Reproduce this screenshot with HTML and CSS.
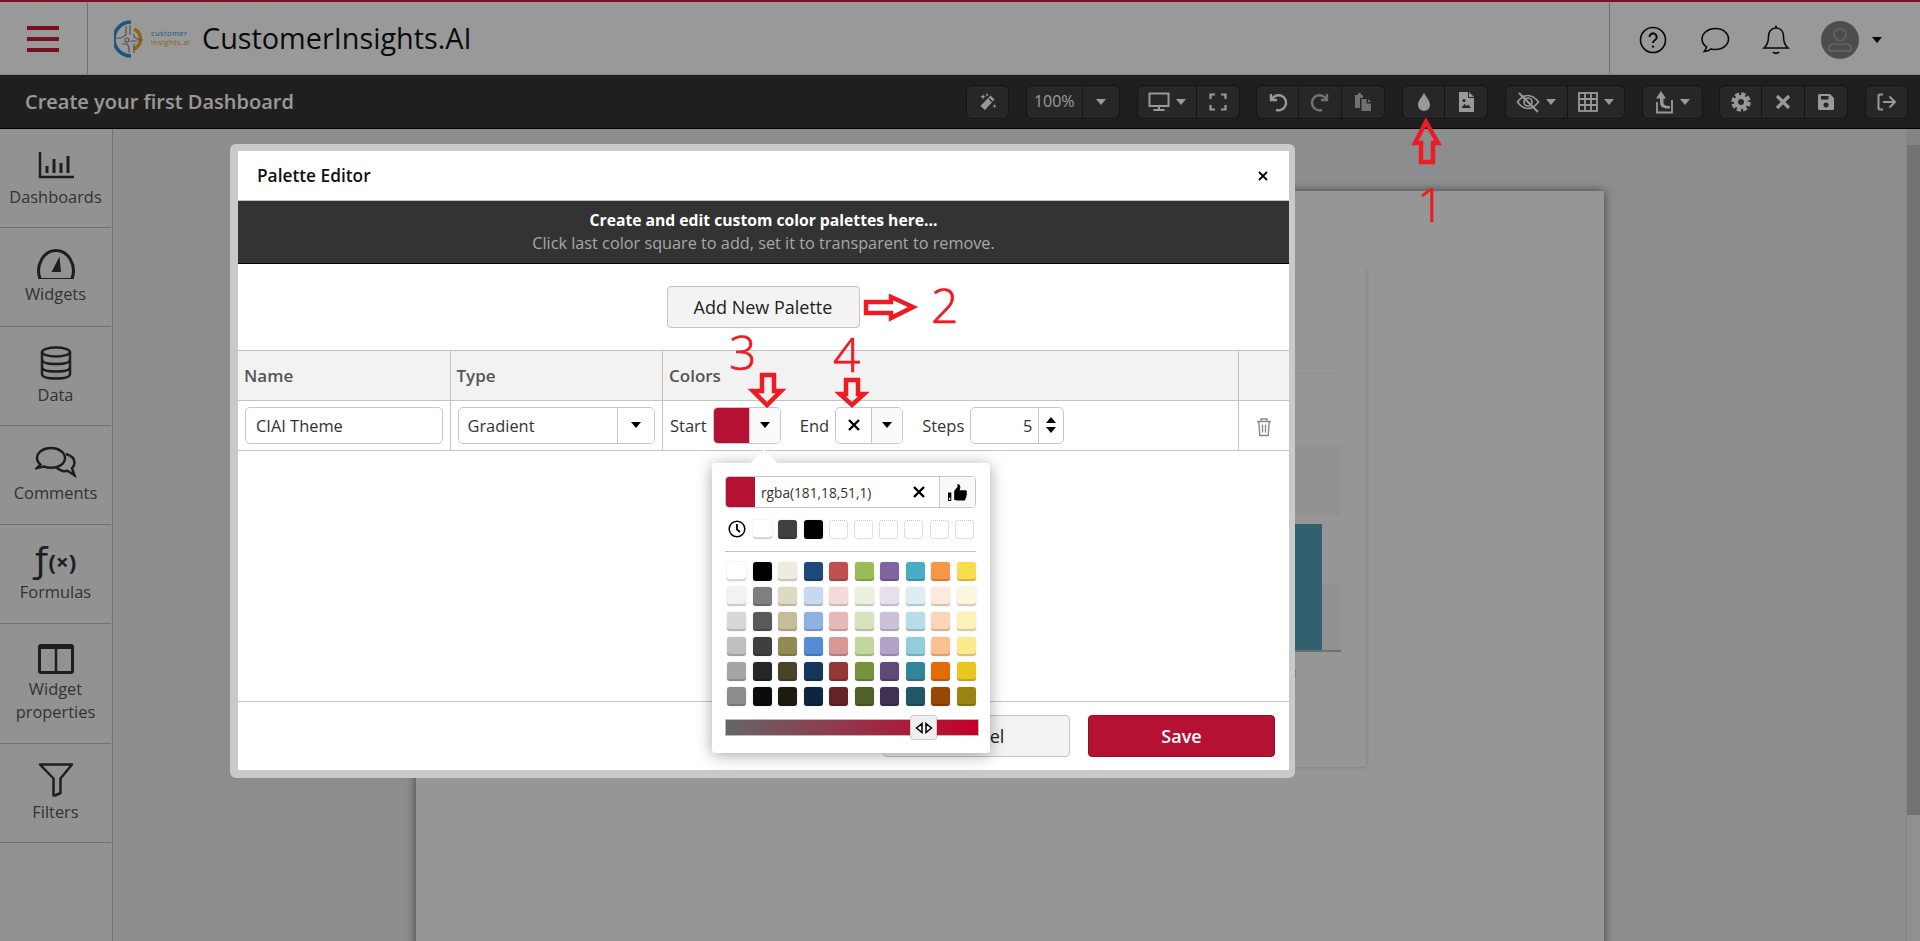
FILE: index.html
```html
<!DOCTYPE html>
<html lang="en">
<head>
<meta charset="utf-8">
<title>CustomerInsights.AI</title>
<link rel="stylesheet" href="styles.css">
</head>
<body>
<header class="topbar">
  <div class="burger"><span></span><span></span><span></span></div>
  <div class="brand">
    <svg class="logo-mark" viewBox="0 0 32 38" width="32" height="38" fill="none">
      <path d="M16 2A17 17 0 0 0 16 36" stroke="#2f8fc9" stroke-width="3.5" transform="translate(1 0)"/>
      <path d="M20 9A11 11 0 0 1 20 29" stroke="#f0a428" stroke-width="3.5"/>
      <path d="M12 6V15L7 18H2M16 5V15M20 14V17L25 20H29M8 24H13L15 27V33M20 24V33M17 21H23" stroke="#8a8a8a" stroke-width="1.2"/>
      <circle cx="13" cy="20" r="2" stroke="#8a8a8a" stroke-width="1.2"/>
    </svg>
    <div class="logo-text"><span class="logo-a">customer</span><span class="logo-b">insights.ai</span></div>
    <h1 class="app-title">CustomerInsights.AI</h1>
  </div>
  <div class="user-tools">
    <svg class="ut" viewBox="0 0 28 28" width="28" height="28" fill="none" stroke="#111" stroke-width="1.6"><circle cx="14" cy="14" r="12.5"/><path d="M10.5 11a3.6 3.6 0 1 1 5.6 3c-1.4.9-2.1 1.5-2.1 3" stroke-width="2"/><circle cx="14" cy="20.6" r="1.2" fill="#111" stroke="none"/></svg>
    <svg class="ut" viewBox="0 0 30 28" width="30" height="28" fill="none" stroke="#111" stroke-width="1.6"><path d="M15.5 2.500c7.500 0 13 4.600 13 10.500s-5.500 10.500-13 10.500c-1.600 0-3-.2-4.300-.6-1.800 1.400-4 2.400-7 2.600 1.200-1.500 2-3 2.300-4.700C3.600 19 2 16.200 2 13 2 7.100 8 2.500 15.500 2.500z"/></svg>
    <svg class="ut" viewBox="0 0 28 32" width="28" height="32" fill="none" stroke="#111" stroke-width="1.6"><path d="M14 1.500v2.500M14 4c-5 0-7.500 3.800-7.500 8.500 0 6-1.500 9-4.500 11.500h24c-3-2.500-4.500-5.500-4.500-11.500C21.500 7.800 19 4 14 4zM11 28c1 1.600 5 1.600 6 0"/></svg>
    <div class="avatar">
      <svg viewBox="0 0 38 38" width="38" height="38" fill="none" stroke="#a8a8a8" stroke-width="1.6"><circle cx="19" cy="13.500" r="6"/><path d="M8 30v-2.500c0-3 2-4.500 5-4.500h12c3 0 5 1.500 5 4.500V30z"/></svg>
    </div>
    <span class="caret caret-dark"></span>
  </div>
</header>

<div class="toolbar">
  <div class="tb-title">Create your first Dashboard</div>
  <div class="tb-actions">
    <div class="tb-group">
      <button class="tb-btn w43"><svg viewBox="0 0 20 20" width="20" height="20" fill="#fff"><path d="M12.500 3.500l4 4L7 18l-4.500-4z"/><path d="M11 6.500l3.500 3.500" stroke="#3f3f3f" stroke-width="1.200"/><path d="M5 2l.8 2 2 .8-2 .8L5 7.500l-.8-1.900-2-.8 2-.8zM9 1l.5 1.200L10.700 3l-1.200.5L9 4.700l-.5-1.200L7.300 3l1.200-.8zM16.500 12l.6 1.500 1.500.6-1.500.6-.6 1.500-.6-1.500-1.500-.6 1.500-.6z"/></svg></button>
    </div>
    <div class="tb-group">
      <button class="tb-btn w57 tb-text">100%</button>
      <button class="tb-btn w37"><span class="caret"></span></button>
    </div>
    <div class="tb-group">
      <button class="tb-btn w60"><svg viewBox="0 0 22 20" width="22" height="20" fill="none" stroke="#fff" stroke-width="2"><rect x="1.500" y="1.500" width="19" height="12.500"/><path d="M11 14v4M5.500 18h11"/></svg><span class="caret"></span></button>
      <button class="tb-btn w43"><svg viewBox="0 0 18 18" width="18" height="18" fill="none" stroke="#fff" stroke-width="2.200"><path d="M1.500 6V1.500H6M12 1.500h4.500V6M16.500 12v4.500H12M6 16.500H1.500V12"/></svg></button>
    </div>
    <div class="tb-group">
      <button class="tb-btn w43"><svg viewBox="0 0 20 20" width="20" height="20" fill="none" stroke="#fff" stroke-width="2.400"><path d="M3 2v6h6"/><path d="M3.500 8A7.500 7.500 0 1 1 8 17.800"/></svg></button>
      <button class="tb-btn w43 dim"><svg viewBox="0 0 20 20" width="20" height="20" fill="none" stroke="#fff" stroke-width="2.400"><path d="M17 2v6h-6"/><path d="M16.500 8A7.500 7.500 0 1 0 12 17.800"/></svg></button>
      <button class="tb-btn w43 dim"><svg viewBox="0 0 18 20" width="18" height="20" fill="#fff"><path d="M1 3h3V1h3v2h2v3H6v10H1z"/><path d="M7.500 7h5v4.500H17V19H7.500zM14 7l3 3h-3z"/></svg></button>
    </div>
    <div class="tb-group">
      <button class="tb-btn w43"><svg viewBox="0 0 14 20" width="14" height="20" fill="#fff"><path d="M7 .5c1 3.500 6 7.500 6 12.500a6 6 0 0 1-12 0C1 8 6 4 7 .5z"/></svg></button>
      <button class="tb-btn w43"><svg viewBox="0 0 15 20" width="15" height="20" fill="#fff"><path d="M0 0h9v6h6v14H0zM10 0l5 5h-5z"/><path d="M2.500 16l3-4 2 2 1.500-1.500 3 3.500z" fill="#3f3f3f"/><circle cx="5" cy="8.500" r="1.500" fill="#3f3f3f"/></svg></button>
    </div>
    <div class="tb-group">
      <button class="tb-btn w63"><svg viewBox="0 0 24 22" width="24" height="22" fill="none" stroke="#fff" stroke-width="1.700"><path d="M1.500 11C5 6.500 8.500 4.500 12 4.500S19 6.500 22.500 11C19 15.500 15.500 17.500 12 17.500S5 15.500 1.500 11z"/><circle cx="12" cy="11" r="4"/><path d="M3 2l19 19" stroke-width="2"/></svg><span class="caret"></span></button>
      <button class="tb-btn w57"><svg viewBox="0 0 20 20" width="20" height="20" fill="none" stroke="#fff" stroke-width="1.800"><rect x="1" y="1" width="18" height="18"/><path d="M7 1v18M13 1v18M1 7h18M1 13h18"/></svg><span class="caret"></span></button>
    </div>
    <div class="tb-group">
      <button class="tb-btn w61"><svg viewBox="0 0 20 24" width="20" height="24" fill="none" stroke="#fff"><path d="M2 8.500L7 1l5 7.500H9.500v4c0 2.500 2 3.500 6.500 3.500v2.500c-6 .5-10-1.500-10-6V8.500z" fill="#fff" stroke="none"/><path d="M3 12v10.500h15V10" stroke-width="1.800"/></svg><span class="caret"></span></button>
    </div>
    <div class="tb-group">
      <button class="tb-btn w43"><svg viewBox="0 0 20 20" width="20" height="20" fill="none" stroke="#fff"><circle cx="10" cy="10" r="5" stroke-width="4"/><circle cx="10" cy="10" r="8" stroke-width="3.400" stroke-dasharray="4.200 2.080"/></svg></button>
      <button class="tb-btn w43"><svg viewBox="0 0 16 16" width="16" height="16" fill="none" stroke="#fff" stroke-width="3.200"><path d="M2 2l12 12M14 2L2 14"/></svg></button>
      <button class="tb-btn w43"><svg viewBox="0 0 18 18" width="18" height="18" fill="#fff"><path d="M1 2.500Q1 1 2.500 1H13l4 4v10.500q0 1.500-1.500 1.500h-13Q1 17 1 15.500z"/><rect x="4" y="3" width="7.500" height="3.500" fill="#3f3f3f"/><circle cx="9" cy="12" r="2.500" fill="#3f3f3f"/></svg></button>
    </div>
    <div class="tb-group">
      <button class="tb-btn w43"><svg viewBox="0 0 20 18" width="20" height="18" fill="none" stroke="#fff" stroke-width="2"><path d="M6 1.500H3Q1.500 1.500 1.500 3v12q0 1.500 1.500 1.500h3"/><path d="M6 9h12M12.500 3.500L18 9l-5.500 5.500"/></svg></button>
    </div>
  </div>
</div>

<div class="workspace">
  <nav class="sidebar">
    <a class="nav-item nav-first">
      <svg viewBox="0 0 36 28" width="36" height="28" fill="none" stroke="#333"><path d="M2 1v25h34" stroke-width="2.500"/><path d="M9 15v7M16 8v14M23 12v10M30 5v17" stroke-width="3"/></svg>
      <span>Dashboards</span>
    </a>
    <a class="nav-item">
      <svg viewBox="0 0 40 30" width="40" height="30" fill="none" stroke="#333"><path d="M4 29.500C-1 16 8 1.500 20 1.500s21 14.500 16 28" stroke-width="3"/><path d="M2 29.500h36" stroke-width="1"/><path d="M23.500 7.500L25 23H15.500z" fill="#333" stroke="none"/></svg>
      <span>Widgets</span>
    </a>
    <a class="nav-item">
      <svg viewBox="0 0 32 34" width="32" height="34" fill="none" stroke="#333" stroke-width="2.500"><ellipse cx="16" cy="6" rx="14" ry="4.500"/><path d="M2 6v22c0 3 6 4.500 14 4.500S30 31 30 28V6M2 13.500c0 3 6 4.500 14 4.500s14-1.500 14-4.500M2 21c0 3 6 4.500 14 4.500S30 24 30 21"/></svg>
      <span>Data</span>
    </a>
    <a class="nav-item">
      <svg viewBox="0 0 42 32" width="42" height="32" fill="none" stroke="#333" stroke-width="2.500"><path d="M16 2C8 2 2 6.500 2 12c0 2.500 1.200 4.800 3.300 6.500L2 22l7-1.500c2 .8 4.500 1.300 7 1.300 8 0 14-4.300 14-9.800S24 2 16 2z"/><path d="M31 8c5 1.500 8.500 4.500 8.500 8.500 0 2.500-1 4.300-2.500 5.800l2.500 7-7-4.500c-2 .5-3.500.6-5 .2-3-.8-5-2-6.500-4"/></svg>
      <span>Comments</span>
    </a>
    <a class="nav-item">
      <span class="fx-mark"><i>ƒ</i><b>(×)</b></span>
      <span>Formulas</span>
    </a>
    <a class="nav-item nav-tall">
      <svg viewBox="0 0 36 30" width="36" height="30" fill="none" stroke="#333"><rect x="1.500" y="1.500" width="33" height="27" rx="1.500" stroke-width="3"/><path d="M1.500 3h33" stroke-width="4"/><path d="M18 2v26" stroke-width="2.500"/></svg>
      <span>Widget<br>properties</span>
    </a>
    <a class="nav-item">
      <svg viewBox="0 0 36 34" width="36" height="34" fill="none" stroke="#333" stroke-width="2.500" stroke-linejoin="round"><path d="M2 1.500h32L22.500 15.500V30l-5.500 2.500h-1.500V15.500z"/></svg>
      <span>Filters</span>
    </a>
  </nav>
  <main class="stage">
    <section class="canvas">
      <div class="card">
        <div class="plot"><div class="bar"></div></div>
        <div class="tick">3</div>
      </div>
    </section>
  </main>
  <div class="scrollbar"><div class="sb-btn"></div><div class="sb-thumb"></div></div>
</div>

<div class="backdrop"></div>

<div class="modal">
  <div class="modal-head"><span>Palette Editor</span><svg viewBox="0 0 10 10" width="10" height="10" fill="none" stroke="#000" stroke-width="1.800"><path d="M1 1l8 8M9 1L1 9"/></svg></div>
  <div class="modal-band"><strong>Create and edit custom color palettes here...</strong><span>Click last color square to add, set it to transparent to remove.</span></div>
  <div class="modal-add"><button class="btn btn-add">Add New Palette</button></div>
  <div class="ptable">
    <div class="pcell phead">Name</div>
    <div class="pcell phead">Type</div>
    <div class="pcell phead">Colors</div>
    <div class="pcell phead"></div>
    <div class="pcell"><div class="field field-name">CIAI Theme</div></div>
    <div class="pcell"><div class="field field-type"><span>Gradient</span><i class="field-drop"><span class="caret caret-dark"></span></i></div></div>
    <div class="pcell pcolors">
      <span class="lbl">Start</span>
      <div class="field color-box"><i class="swatch-main"></i><i class="field-drop"><span class="caret caret-dark"></span></i></div>
      <span class="lbl lbl-next">End</span>
      <div class="field color-box"><i class="swatch-none"><svg viewBox="0 0 12 12" width="12" height="12" fill="none" stroke="#000" stroke-width="2.400"><path d="M1 1l10 10M11 1L1 11"/></svg></i><i class="field-drop"><span class="caret caret-dark"></span></i></div>
      <span class="lbl lbl-next">Steps</span>
      <div class="field field-steps"><span>5</span><i class="spin"><span class="caret-up"></span><span class="caret caret-dark"></span></i></div>
    </div>
    <div class="pcell ptrash"><svg viewBox="0 0 16 20" width="16" height="20" fill="none" stroke="#8a8a8a" stroke-width="1.400"><path d="M1 4.500h14M5 4.500V2h6v2.500M2.800 4.500l1 14h8.400l1-14M6.500 7.500v8M9.500 7.500v8"/></svg></div>
  </div>
  <div class="modal-spacer"></div>
  <div class="modal-foot">
    <button class="btn btn-cancel">Cancel</button>
    <button class="btn btn-save">Save</button>
  </div>

  <div class="picker">
    <div class="pk-input">
      <i class="pk-current"></i>
      <span class="pk-value">rgba(181,18,51,1)</span>
      <svg class="pk-clear" viewBox="0 0 12 12" width="12" height="12" fill="none" stroke="#000" stroke-width="2.400"><path d="M1 1l10 10M11 1L1 11"/></svg>
      <span class="pk-ok"><svg viewBox="0 0 20 20" width="19" height="19" fill="#000"><path d="M6.500 8.500l3.500-4.500V1c2 0 3 1.500 3 3.500 0 1-.4 2-.8 3h6c1 0 1.800.8 1.800 1.800 0 .6-.3 1-.6 1.400.4.300.6.800.6 1.300 0 .7-.4 1.200-.9 1.500.2.300.3.600.3 1 0 .7-.4 1.200-1 1.500.1.200.1.400.1.600 0 1-.8 1.900-2 1.900h-6c-1.500 0-2.500-.6-4-1zM0 10h3.500v9H0z"/><rect x="1" y="15.500" width="1.500" height="2.200" fill="#fff"/></svg></span>
    </div>
    <div class="pk-recent">
      <svg viewBox="0 0 18 18" width="18" height="18" fill="none" stroke="#000" stroke-width="1.500"><circle cx="9" cy="9" r="7.800"/><path d="M9 4v5.500l3 2.500" stroke-width="1.800"/></svg>
      <i class="sw" style="background:#fff"></i><i class="sw" style="background:#404040"></i><i class="sw" style="background:#000"></i>
      <i class="sw-empty"></i><i class="sw-empty"></i><i class="sw-empty"></i><i class="sw-empty"></i><i class="sw-empty"></i><i class="sw-empty"></i>
    </div>
    <div class="pk-rule"></div>
    <div class="pk-grid">
      <i class="sw" style="background:#fff"></i><i class="sw" style="background:#000"></i><i class="sw" style="background:#eeece1"></i><i class="sw" style="background:#1f497d"></i><i class="sw" style="background:#c0504d"></i><i class="sw" style="background:#9bbb59"></i><i class="sw" style="background:#8064a2"></i><i class="sw" style="background:#4bacc6"></i><i class="sw" style="background:#f79646"></i><i class="sw" style="background:#fadd4a"></i>
      <i class="sw" style="background:#f2f2f2"></i><i class="sw" style="background:#7f7f7f"></i><i class="sw" style="background:#ddd9c3"></i><i class="sw" style="background:#c6d9f0"></i><i class="sw" style="background:#f2dcdb"></i><i class="sw" style="background:#ebf1dd"></i><i class="sw" style="background:#e5e0ec"></i><i class="sw" style="background:#dbeef3"></i><i class="sw" style="background:#fdeada"></i><i class="sw" style="background:#fbf6dd"></i>
      <i class="sw" style="background:#d8d8d8"></i><i class="sw" style="background:#595959"></i><i class="sw" style="background:#c4bd97"></i><i class="sw" style="background:#8db3e2"></i><i class="sw" style="background:#e5b9b7"></i><i class="sw" style="background:#d7e3bc"></i><i class="sw" style="background:#ccc1d9"></i><i class="sw" style="background:#b7dde8"></i><i class="sw" style="background:#fbd5b5"></i><i class="sw" style="background:#fcf2b8"></i>
      <i class="sw" style="background:#bfbfbf"></i><i class="sw" style="background:#3f3f3f"></i><i class="sw" style="background:#938953"></i><i class="sw" style="background:#548dd4"></i><i class="sw" style="background:#d99694"></i><i class="sw" style="background:#c3d69b"></i><i class="sw" style="background:#b2a2c7"></i><i class="sw" style="background:#92cddc"></i><i class="sw" style="background:#fac08f"></i><i class="sw" style="background:#fae98d"></i>
      <i class="sw" style="background:#a5a5a5"></i><i class="sw" style="background:#262626"></i><i class="sw" style="background:#494429"></i><i class="sw" style="background:#17365d"></i><i class="sw" style="background:#953734"></i><i class="sw" style="background:#76923c"></i><i class="sw" style="background:#5f497a"></i><i class="sw" style="background:#31859b"></i><i class="sw" style="background:#e36c09"></i><i class="sw" style="background:#e8c81f"></i>
      <i class="sw" style="background:#8c8c8c"></i><i class="sw" style="background:#0c0c0c"></i><i class="sw" style="background:#1d1b10"></i><i class="sw" style="background:#0f243e"></i><i class="sw" style="background:#632423"></i><i class="sw" style="background:#4f6128"></i><i class="sw" style="background:#3f3151"></i><i class="sw" style="background:#205867"></i><i class="sw" style="background:#974806"></i><i class="sw" style="background:#9a8412"></i>
    </div>
    <div class="pk-slider"><span class="pk-thumb"><svg viewBox="0 0 18 12" width="18" height="12" fill="none" stroke="#000" stroke-width="1.500"><path d="M7 1.500L1.500 6 7 10.500zM11 1.500L16.500 6 11 10.500z"/></svg></span></div>
  </div>
</div>

<svg class="marks" viewBox="0 0 1920 941" width="1920" height="941" fill="none">
  <path class="mark-line" d="M1426 122L1438 143H1433V162H1421V143H1415z"/>
  <path class="mark-line" d="M866 302H891V297L913 307L891 318V313H866z"/>
  <path class="mark-line" d="M762 375H774V391H781L767 405L753 391H762z"/>
  <path class="mark-line" d="M846 380H858V394H864L852 405L840 394H846z"/>
  <text class="mark-digit" x="1417" y="222">1</text>
  <text class="mark-digit" x="931" y="323">2</text>
  <text class="mark-digit" x="729" y="370">3</text>
  <text class="mark-digit" x="833" y="372">4</text>
</svg>
</body>
</html>
```
FILE: styles.css
```css
* { box-sizing: border-box; }
html, body { margin: 0; height: 100%; overflow: hidden; }
body {
  display: flex;
  flex-direction: column;
  font-family: "Open Sans", "Noto Sans", "Liberation Sans", sans-serif;
  color: #333;
  background: #fff;
}
i { font-style: normal; }
button { font-family: inherit; }

/* top bar */
.topbar {
  height: 75px;
  flex: none;
  display: flex;
  align-items: stretch;
  background: #fff;
  border-top: 2px solid #cc1c3e;
  border-bottom: 1px solid #ddd;
}
.burger {
  width: 88px;
  padding: 23px 28px 22px 27px;
  display: flex;
  flex-direction: column;
  justify-content: space-between;
  border-right: 1px solid #bbb;
  margin-top: 1px;
}
.burger span { display: block; height: 4px; background: #c51b3c; }
.brand { display: flex; align-items: center; flex: 1; padding-left: 26px; }
.logo-mark { flex: none; margin-top: 1px; }
.logo-text { display: flex; flex-direction: column; margin-left: 5px; font-size: 7.500px; line-height: 9px; letter-spacing: .4px; width: 34px; flex: none; }
.logo-a { color: #2f8fc9; }
.logo-b { color: #f0a428; }
.app-title { margin: 0 0 0 17px; font-size: 28.800px; font-weight: 400; color: #111; line-height: 1; }
.user-tools {
  width: 311px;
  flex: none;
  display: flex;
  align-items: center;
  border-left: 1px solid #bbb;
  padding: 2px 0 0 29px;
  margin-top: 1px;
}
.ut { flex: none; }
.ut:nth-child(1) { margin-right: 33px; }
.ut:nth-child(2) { margin-right: 32px; }
.ut:nth-child(3) { margin-right: 31px; }
.avatar { width: 38px; height: 38px; border-radius: 50%; background: #808080; margin-right: 13px; }
.caret { display: inline-block; width: 0; height: 0; border-left: 5.500px solid transparent; border-right: 5.500px solid transparent; border-top: 6px solid #fff; }
.caret-dark { border-top-color: #000; border-left-width: 5px; border-right-width: 5px; }
.caret-up { display: inline-block; width: 0; height: 0; border-left: 5px solid transparent; border-right: 5px solid transparent; border-bottom: 6px solid #000; }

/* toolbar */
.toolbar {
  height: 54px;
  flex: none;
  display: flex;
  align-items: center;
  justify-content: space-between;
  padding: 0 12px 0 25px;
  background: #343434;
  border-bottom: 1px solid #000;
}
.tb-title { color: #fff; font-size: 20px; font-weight: 600; }
.tb-actions { display: flex; gap: 16.750px; }
.tb-group { display: flex; height: 34px; }
.tb-btn {
  height: 34px;
  padding: 0;
  display: flex;
  align-items: center;
  justify-content: center;
  gap: 6px;
  background: #414141;
  border: 1px solid #222;
  border-left-width: 0;
  color: #fff;
}
.tb-btn:first-child { border-left-width: 1px; border-radius: 6px 0 0 6px; }
.tb-btn:last-child { border-radius: 0 6px 6px 0; }
.tb-btn:only-child { border-radius: 6px; }
.dim svg { opacity: .65; }
.tb-text { font-size: 16px; padding-bottom: 2px; }
.w37 { width: 37px; }
.w43 { width: 43px; }
.w57 { width: 57px; }
.w60 { width: 60px; }
.w61 { width: 61px; }
.w63 { width: 63px; }

/* workspace */
.workspace { flex: 1; display: flex; min-height: 0; }
.sidebar { width: 113px; flex: none; background: #f4f4f4; border-right: 1px solid #bdbdbd; }
.nav-item {
  height: 99px;
  margin-right: 1px;
  display: flex;
  flex-direction: column;
  align-items: center;
  justify-content: center;
  gap: 3px;
  border-bottom: 1px solid #bdbdbd;
  text-align: center;
  font-size: 16.400px;
  line-height: 23px;
  color: #555;
}
.nav-first { gap: 6px; padding-top: 2px; }
.nav-tall { height: 120px; }
.fx-mark { display: flex; align-items: center; color: #333; height: 32px; line-height: 32px; }
.fx-mark i { font-size: 36px; font-family: "DejaVu Sans", sans-serif; }
.fx-mark b { font-size: 22px; font-weight: 700; margin-left: 1px; }
.stage { flex: 1; min-width: 0; display: flex; justify-content: center; background: #eaebee; overflow: hidden; }
.canvas {
  width: 1188px;
  height: 900px;
  flex: none;
  margin: 62px 0 0 1px;
  padding: 76px 238px 0;
  background: #fafafa;
  box-shadow: 0 0 9px rgba(0,0,0,.55);
}
.card {
  height: 500px;
  padding: 106px 25px 0 0;
  background: #fbfbfb;
  border-radius: 3px;
  box-shadow: 1px 1px 3px rgba(0,0,0,.12);
}
.plot {
  height: 279px;
  display: flex;
  justify-content: flex-end;
  align-items: flex-end;
  padding-right: 19px;
  border-top: 1px solid #eee;
  border-bottom: 2px solid #bbb;
  background: linear-gradient(#fbfbfb 71px, #f4f4f4 71px, #f4f4f4 142px, #fbfbfb 142px, #fbfbfb 210px, #f4f4f4 210px);
}
.bar { width: 60px; height: 126px; background: #54a0b8; }
.tick { margin-top: 12px; margin-right: 44px; text-align: right; font-size: 13px; color: #bbb; }
.scrollbar { width: 14px; flex: none; background: #f0f0f0; border-left: 1px solid #ddd; display: flex; flex-direction: column; }
.sb-btn { height: 16px; background: #ddd; }
.sb-thumb { height: 670px; background: #c0c0c0; }

.backdrop { position: fixed; inset: 0; background: rgba(0,0,0,.4); }

/* modal */
.modal {
  position: fixed;
  left: 230px;
  top: 144px;
  width: 1065px;
  height: 634px;
  display: flex;
  flex-direction: column;
  background: #fff;
  border-style: solid;
  border-width: 7px 6px 8px 8px;
  border-color: #c8caca;
  border-radius: 6px;
  color: #333;
}
.modal-head {
  height: 50px;
  flex: none;
  display: flex;
  align-items: center;
  justify-content: space-between;
  padding: 0 21px 0 19px;
  font-size: 17.300px;
  font-weight: 600;
  color: #111;
  border-bottom: 1px solid #c4c4c4;
}
.modal-band {
  height: 63px;
  flex: none;
  display: flex;
  flex-direction: column;
  align-items: center;
  justify-content: center;
  background: #333;
  border-bottom: 1px solid #000;
  font-size: 16.250px;
  line-height: 23px;
  color: #a8a8a8;
}
.modal-band strong { color: #fff; font-size: 15.700px; font-weight: 700; }
.modal-add { height: 86px; flex: none; display: flex; align-items: center; justify-content: center; padding-right: 1px; }
.btn { height: 42px; border: 1px solid #c4c4c4; border-radius: 4px; background: #f3f3f3; font-size: 18px; color: #222; padding: 0; }
.btn-add { width: 193px; font-weight: 500; }
.btn-cancel { width: 187px; }
.btn-save { width: 187px; background: #b51233; border-color: #8f0e28; color: #fff; font-weight: 600; }

.ptable { flex: none; display: grid; grid-template-columns: 212.500px 212.500px 576px 50px; grid-template-rows: 50px 50px; border-top: 1px solid #c4c4c4; }
.pcell { display: flex; align-items: center; padding: 0 7px 1px; border-right: 1px solid #c4c4c4; border-bottom: 1px solid #c4c4c4; }
.pcell:nth-child(4n) { border-right: 0; }
.phead { background: #f2f2f2; font-size: 17px; font-weight: 600; color: #555; padding-left: 6px; }
.field { height: 37px; display: flex; align-items: center; border: 1px solid #c8c8c8; border-radius: 5px; font-size: 16.400px; color: #333; background: #fff; overflow: hidden; }
.field-name { width: 198px; padding-left: 10px; }
.field-type { width: 198px; padding-left: 9px; justify-content: space-between; }
.field-drop { width: 37px; height: 100%; display: flex; align-items: center; justify-content: center; border-left: 1px solid #c8c8c8; background: #fafafa; }
.field-type .field-drop { width: 37px; background: #fff; }
.pcolors { padding-left: 7px; }
.lbl { font-size: 16.500px; color: #333; margin-right: 6px; }
.lbl-next { margin-left: 19px; }
.color-box { width: 68px; flex: none; }
.color-box .field-drop { width: 31px; flex: none; }
.swatch-main { flex: 1; height: 100%; background: #b51233; }
.swatch-none { flex: 1; height: 100%; display: flex; align-items: center; justify-content: center; }
.field-steps { width: 94px; flex: none; justify-content: flex-end; }
.spin { width: 25px; height: 100%; margin-left: 6px; display: flex; flex-direction: column; align-items: center; justify-content: center; gap: 4px; border-left: 1px solid #c8c8c8; }
.ptrash { justify-content: center; padding: 3px 0 0; }
.modal-spacer { flex: 1; }
.modal-foot { height: 69px; flex: none; display: flex; align-items: center; justify-content: flex-end; gap: 18px; padding: 0 14px 0 0; border-top: 1px solid #c4c4c4; }

/* colour picker */
.picker {
  position: absolute;
  left: 474px;
  top: 312px;
  width: 278px;
  height: 290px;
  padding: 13px 13px 0;
  background: #fff;
  border-radius: 4px;
  box-shadow: 0 2px 16px rgba(0,0,0,.35);
}
.picker::before {
  content: "";
  position: absolute;
  left: 40px;
  top: -9px;
  width: 24px;
  height: 24px;
  background: #fff;
  transform: rotate(45deg);
  border-radius: 2px 0 0 0;
  clip-path: polygon(0 0, 100% 0, 0 100%);
}
.pk-input { width: 251px; height: 32px; display: flex; align-items: center; border: 1px solid #c8c8c8; border-radius: 4px; overflow: hidden; }
.pk-current { width: 29px; height: 100%; background: #b51233; flex: none; }
.pk-value { flex: 1; padding-left: 6px; font-size: 13.700px; color: #333; }
.pk-clear { flex: none; margin-right: 14px; }
.pk-ok { width: 36px; height: 100%; display: flex; align-items: center; justify-content: center; flex: none; border-left: 1px solid #c8c8c8; background: #f9f9f9; }
.pk-recent { display: grid; grid-template-columns: repeat(10, 19px); column-gap: 6.200px; align-items: center; margin: 11px 0 0 3px; height: 20px; }
.sw { display: block; width: 19px; height: 19px; border-radius: 3px; box-shadow: inset 0 -2px 0 rgba(0,0,0,.16), 0 0 2px rgba(0,0,0,.16); }
.sw-empty { display: block; width: 19px; height: 19px; border: 1px dotted #c4c4c4; border-radius: 3px; }
.pk-rule { height: 1px; width: 251px; background: #c4c4c4; margin: 12px 0 10px; }
.pk-grid { display: grid; grid-template-columns: repeat(10, 19px); column-gap: 6.500px; row-gap: 6px; margin-left: 2px; }
.pk-slider { position: relative; width: 254px; height: 17px; margin-top: 13px; border: 1px solid #bbb; background: linear-gradient(90deg, #666, #c5002a); }
.pk-thumb { position: absolute; left: 184px; top: -5px; width: 27px; height: 25px; display: flex; align-items: center; justify-content: center; background: #f0f0f0; border: 1px solid #ccc; border-radius: 3px; }

/* hand drawn annotations */
.marks { position: fixed; left: 0; top: 0; pointer-events: none; }
.mark-line { stroke: #ed1c24; stroke-width: 4.500; }
.mark-digit { fill: #ed1c24; stroke: #ed1c24; stroke-width: .7; font-family: "Open Sans", sans-serif; font-weight: 300; font-size: 48px; }
```
